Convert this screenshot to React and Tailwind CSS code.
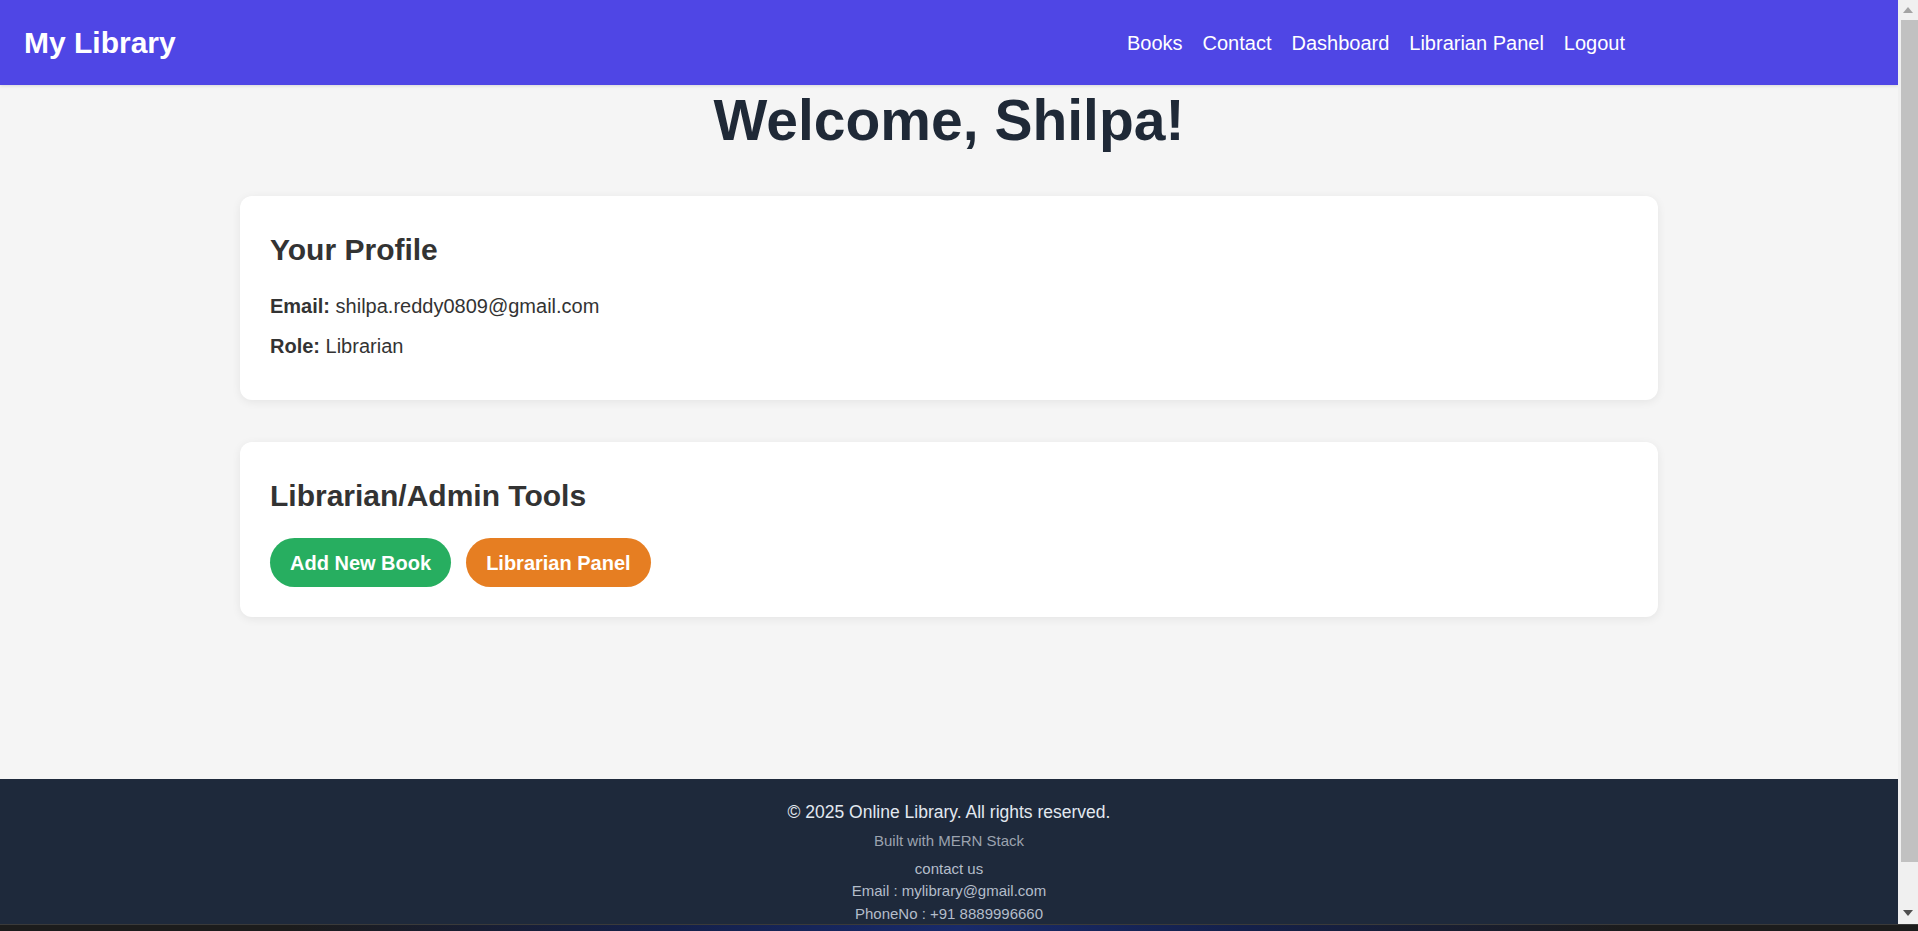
export default function App() {
  const links = ["Books", "Contact", "Dashboard", "Librarian Panel", "Logout"];
  return (
    <div className="w-[1918px] h-[931px] overflow-hidden flex flex-col font-['Liberation_Sans',Arial,sans-serif]">
      <div className="flex h-[924px] shrink-0">
        <div className="w-[1898px] h-full overflow-hidden bg-[#f5f5f5] flex flex-col">
          <header className="h-[85px] shrink-0 bg-[#4f46e5] flex items-center justify-between pl-[24px] pr-[273px] shadow-[0_1px_3px_rgba(0,0,0,0.12)]">
            <div className="text-white font-bold text-[30px] leading-[35px]">My Library</div>
            <nav className="flex gap-5">
              {links.map((l) => (
                <a key={l} className="text-white text-[20px] leading-[24px]">
                  {l}
                </a>
              ))}
            </nav>
          </header>
          <main className="h-[694px] shrink-0">
            <h1 className="mt-[4px] text-center font-bold text-[57px] leading-[62px] text-[#1f2937]">
              Welcome, Shilpa!
            </h1>
            <div className="w-[1418px] mx-auto mt-[45px] flex flex-col gap-[42px]">
              <section className="bg-white rounded-xl shadow-[0_2px_10px_rgba(0,0,0,0.07)] pt-[36px] px-[30px] pb-[42px] text-[#333]">
                <h2 className="font-bold text-[30px] leading-[35px]">Your Profile</h2>
                <p className="mt-[27px] text-[20px] leading-[24px]">
                  <strong className="font-bold">Email:</strong> shilpa.reddy0809@gmail.com
                </p>
                <p className="mt-[16px] text-[20px] leading-[24px]">
                  <strong className="font-bold">Role:</strong> Librarian
                </p>
              </section>
              <section className="bg-white rounded-xl shadow-[0_2px_10px_rgba(0,0,0,0.07)] pt-[36px] px-[30px] pb-[30px] text-[#333]">
                <h2 className="font-bold text-[30px] leading-[35px]">Librarian/Admin Tools</h2>
                <div className="mt-[25px] flex gap-[15px]">
                  <button className="h-[49px] px-5 rounded-full bg-[#27ae60] text-white font-bold text-[20px] leading-[24px] flex items-center">
                    Add New Book
                  </button>
                  <button className="h-[49px] px-5 rounded-full bg-[#e67e22] text-white font-bold text-[20px] leading-[24px] flex items-center">
                    Librarian Panel
                  </button>
                </div>
              </section>
            </div>
          </main>
          <footer className="shrink-0 bg-[#1e293b] pt-[21px] pb-[20px] text-center">
            <p className="text-[17.5px] leading-[24px] text-[#e2e8f0]">© 2025 Online Library. All rights reserved.</p>
            <p className="mt-[5.5px] text-[15px] leading-[22.5px] text-[#9ca3af]">Built with MERN Stack</p>
            <div className="mt-[5.5px] text-[15px] leading-[22.5px] text-[#b4bdca]">
              <p>contact us</p>
              <p>Email : mylibrary@gmail.com</p>
              <p>PhoneNo : +91 8889996660</p>
            </div>
          </footer>
        </div>
        <div className="w-[20px] h-full bg-[#f0f0f0] flex flex-col items-center">
          <div className="h-[20px] w-full flex items-center justify-center">
            <svg width="10" height="6" viewBox="0 0 10 6"><path d="M5 0 L10 6 L0 6 Z" fill="#a3a3a3" /></svg>
          </div>
          <div className="w-[17px] ml-[2px] h-[842px] bg-[#c1c1c1]" />
          <div className="flex-1" />
          <div className="h-[22px] w-full flex items-center justify-center">
            <svg width="10" height="6" viewBox="0 0 10 6"><path d="M0 0 L10 0 L5 6 Z" fill="#505050" /></svg>
          </div>
        </div>
      </div>
      <div className="h-[7px] shrink-0 border-t border-[#3a3a3a] bg-[linear-gradient(90deg,#1c1c1c_0%,#1c1c1c_15%,#14204a_35%,#182a6a_50%,#14204a_65%,#1c1c1c_85%,#1c1c1c_100%)]" />
    </div>
  );
}
